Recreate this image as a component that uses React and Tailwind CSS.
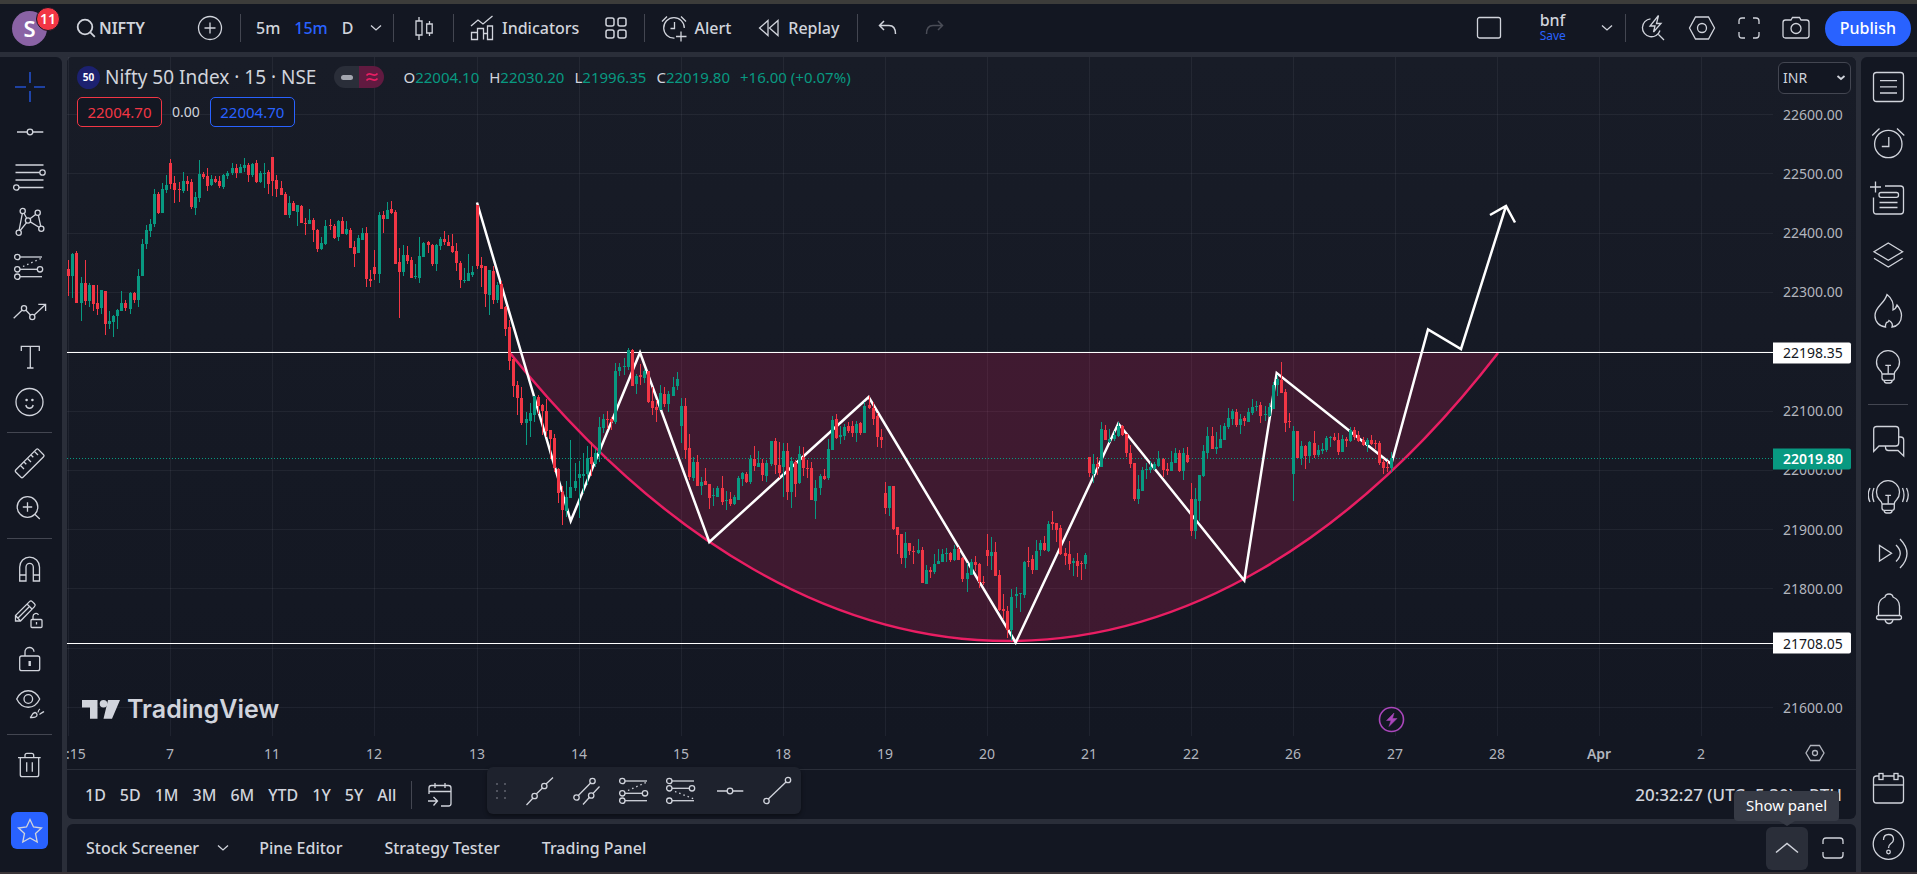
import React, { useState } from 'react';

// Visible pane, in chart units
const PANE_W = 1706;
const PANE_H = 679;
const priceToY = (price) => 57.5 + (22600 - price) * 0.593;
const slotToX = (slot) => 1 + Math.floor(slot * 4.083 + 0.76);

const priceLabels = [22600, 22500, 22400, 22300, 22100, 22000, 21900, 21800, 21600];
const gridPrices = [22600, 22500, 22400, 22300, 22200, 22100, 22000, 21900, 21800, 21700, 21600];
const timeLabels = ['11:15', '7', '11', '12', '13', '14', '15', '18', '19', '20', '21', '22', '26', '27', '28', 'Apr', '2'];

// Each bar is [high, open, close, low], three ticks to a unit, counted down from `top`
const series = [
  {
    slot: 0,
    top: 73,
    bars: [
      [390, 417, 437, 497], [369, 437, 372, 503], [363, 369, 518, 518], [441, 518, 459, 572], [390, 459, 513, 525],
      [459, 513, 465, 531], [465, 465, 521, 543], [465, 519, 537, 555], [480, 534, 480, 551], [483, 483, 581, 614],
      [543, 581, 573, 597], [555, 576, 558, 620], [537, 558, 540, 597], [483, 543, 519, 543], [510, 519, 534, 543],
      [486, 537, 489, 551], [486, 489, 510, 518], [417, 510, 438, 530], [327, 437, 342, 438], [285, 342, 300, 357],
      [267, 303, 282, 321], [177, 282, 192, 291], [186, 192, 249, 252], [159, 249, 177, 249], [135, 180, 165, 189],
      [87, 99, 162, 177], [138, 159, 180, 219], [156, 177, 180, 216], [126, 183, 153, 189], [138, 153, 162, 183],
      [147, 156, 231, 237], [186, 234, 201, 255], [90, 204, 132, 216], [126, 132, 141, 147], [114, 138, 168, 183],
      [135, 165, 147, 168], [138, 147, 156, 159], [138, 153, 168, 174], [132, 171, 135, 177], [123, 138, 129, 147],
      [99, 129, 114, 135], [102, 114, 129, 144], [102, 129, 111, 129], [84, 114, 105, 126], [99, 105, 135, 156],
      [99, 135, 102, 141], [90, 99, 156, 159], [123, 156, 129, 159], [99, 132, 129, 174], [120, 126, 162, 192],
      [81, 81, 153, 198], [135, 150, 177, 201], [153, 174, 195, 195], [186, 192, 255, 255], [198, 255, 219, 264],
      [213, 219, 243, 243], [225, 246, 225, 288], [225, 228, 279, 279], [264, 279, 282, 315], [237, 282, 270, 282],
      [264, 270, 300, 336], [297, 300, 357, 366], [321, 357, 339, 360], [270, 342, 288, 345], [267, 285, 288, 300],
      [282, 288, 324, 327], [270, 321, 273, 333], [261, 273, 312, 312], [273, 312, 297, 315], [294, 300, 354, 354],
      [333, 351, 372, 411], [315, 369, 324, 369], [294, 330, 309, 330], [291, 309, 447, 471], [420, 447, 453, 471],
      [360, 411, 432, 450], [246, 432, 255, 459], [243, 255, 267, 309], [216, 267, 240, 267], [213, 237, 249, 252],
      [240, 246, 402, 402], [354, 396, 426, 564], [345, 426, 375, 438], [348, 375, 393, 402], [381, 390, 444, 444],
      [402, 441, 438, 447], [321, 444, 378, 459], [336, 381, 339, 381], [333, 336, 345, 369], [342, 345, 402, 408],
      [342, 402, 345, 423], [321, 348, 327, 360], [303, 327, 336, 345], [315, 336, 348, 348], [312, 348, 366, 369],
      [339, 363, 399, 423], [393, 399, 450, 474], [414, 453, 450, 459], [372, 453, 429, 453], [408, 435, 426, 441],
      [225, 225, 408, 417], [381, 405, 414, 471], [408, 408, 492, 531], [420, 495, 420, 555], [408, 423, 510, 522],
      [456, 510, 465, 519], [453, 462, 537, 537], [528, 531, 597, 618], [570, 591, 693, 720], [684, 687, 768, 801],
      [753, 765, 804, 855], [771, 804, 879, 885], [846, 879, 867, 945], [819, 873, 849, 921], [798, 855, 798, 876],
      [795, 801, 828, 852], [822, 825, 843, 915], [807, 843, 903, 921],
    ],
  },
  {
    slot: 118,
    top: 273,
    bars: [
      [300, 300, 327, 387], [312, 324, 414, 426], [414, 417, 489, 519], [468, 486, 540, 585], [453, 543, 501, 561],
      [330, 504, 471, 504], [399, 474, 453, 483], [393, 444, 432, 564], [369, 438, 432, 489], [348, 432, 384, 465],
      [336, 381, 402, 438], [357, 402, 369, 411], [261, 372, 291, 396], [252, 294, 267, 309], [243, 267, 270, 297],
      [261, 267, 276, 300], [99, 276, 123, 282], [99, 123, 111, 138], [84, 111, 108, 135], [54, 111, 60, 120],
      [57, 60, 168, 168], [132, 162, 138, 192], [102, 135, 141, 165], [117, 144, 123, 159], [123, 123, 216, 219],
      [171, 213, 234, 255], [210, 231, 240, 276], [165, 240, 189, 240], [171, 192, 222, 231], [183, 222, 192, 246],
      [141, 198, 171, 198], [126, 168, 147, 180], [204, 288, 228, 339], [204, 228, 360, 387], [312, 354, 441, 450],
      [381, 444, 396, 453], [375, 396, 468, 468], [441, 468, 456, 495], [414, 453, 465, 465], [462, 462, 504, 537],
      [474, 498, 495, 528], [468, 501, 474, 501], [438, 474, 516, 525], [483, 513, 510, 540], [486, 507, 522, 528],
      [495, 522, 501, 525], [438, 510, 444, 510], [426, 447, 429, 468], [426, 432, 456, 459], [375, 456, 387, 462],
      [348, 387, 408, 423], [363, 411, 399, 411], [387, 399, 435, 453], [390, 438, 399, 456], [333, 402, 333, 408],
      [324, 333, 405, 432], [336, 405, 429, 444], [339, 411, 363, 501], [339, 363, 486, 510], [381, 486, 393, 534],
      [390, 396, 462, 501], [348, 459, 372, 462], [351, 381, 414, 438], [390, 414, 417, 444], [396, 414, 510, 510],
      [450, 513, 474, 567], [432, 474, 438, 495], [417, 438, 447, 450], [327, 444, 357, 450], [258, 360, 270, 360],
      [252, 267, 324, 327], [288, 321, 315, 342], [282, 318, 291, 330], [276, 288, 303, 309], [273, 288, 309, 321],
      [273, 309, 282, 336], [276, 279, 309, 315], [216, 309, 228, 309], [198, 225, 234, 237], [216, 234, 267, 285],
      [249, 258, 321, 351], [297, 321, 330, 354],
    ],
  },
  {
    slot: 200,
    top: 323,
    bars: [
      [306, 339, 384, 402], [318, 384, 318, 408], [318, 318, 447, 450], [441, 441, 465, 522], [462, 462, 534, 552],
      [456, 534, 489, 564], [489, 489, 513, 525], [498, 513, 516, 552], [477, 519, 510, 522], [501, 510, 609, 609],
      [555, 612, 570, 612], [561, 570, 576, 594], [522, 576, 552, 582], [507, 552, 543, 552], [507, 546, 522, 546],
      [504, 522, 519, 546], [516, 519, 540, 546], [495, 540, 507, 543], [501, 507, 540, 540], [531, 534, 597, 606],
      [549, 597, 579, 636], [537, 585, 546, 585], [528, 546, 555, 573], [549, 552, 606, 624], [588, 606, 609, 615],
      [462, 510, 528, 558], [471, 528, 516, 570], [486, 516, 588, 588], [570, 585, 690, 693], [642, 687, 693, 717],
      [678, 693, 750, 774], [627, 750, 651, 783], [621, 648, 642, 684], [639, 642, 639, 696], [543, 645, 546, 654],
      [501, 543, 546, 561], [525, 537, 570, 582], [480, 570, 513, 570], [480, 510, 489, 528], [468, 489, 510, 513],
      [423, 513, 432, 516], [393, 426, 432, 450], [429, 429, 450, 486], [435, 444, 522, 525], [504, 519, 528, 555],
      [483, 522, 552, 570], [534, 549, 543, 588], [519, 543, 558, 591], [543, 549, 552, 600], [519, 552, 525, 567],
      [231, 231, 279, 291], [222, 282, 252, 309], [231, 252, 261, 285], [126, 261, 147, 261], [135, 150, 180, 180],
      [147, 186, 177, 189], [153, 177, 165, 183], [126, 168, 138, 171], [135, 138, 165, 168], [162, 162, 219, 231],
      [195, 219, 252, 264], [249, 249, 357, 363], [285, 357, 327, 372], [261, 333, 270, 333], [249, 270, 267, 297],
      [243, 270, 261, 279], [246, 267, 252, 270], [213, 258, 237, 261], [234, 237, 270, 291], [249, 267, 273, 285],
      [213, 273, 246, 273], [204, 249, 219, 249], [210, 219, 273, 276], [204, 273, 219, 300], [201, 225, 246, 249],
      [309, 357, 453, 468], [324, 453, 357, 477], [285, 363, 285, 423], [195, 288, 213, 291], [141, 219, 168, 234],
      [141, 168, 207, 207], [156, 207, 201, 222], [135, 204, 177, 204], [129, 180, 138, 180], [84, 141, 114, 147],
      [87, 117, 93, 135], [87, 96, 135, 141], [102, 135, 117, 162],
    ],
  },
  {
    slot: 288,
    top: 263,
    bars: [
      [288, 294, 303, 318], [264, 306, 276, 306], [237, 279, 261, 285], [243, 261, 258, 273], [246, 255, 288, 309],
      [258, 285, 282, 303], [249, 288, 261, 291], [186, 267, 195, 267], [165, 195, 177, 228], [126, 180, 219, 219],
      [207, 216, 309, 336], [279, 303, 306, 324], [318, 462, 333, 543], [333, 333, 414, 414], [363, 414, 378, 435],
      [375, 378, 408, 447], [363, 408, 366, 429], [333, 369, 405, 414], [375, 405, 390, 411], [369, 393, 387, 402],
      [348, 390, 354, 396], [348, 354, 351, 381], [339, 351, 360, 363], [339, 360, 396, 405], [345, 396, 357, 396],
      [351, 357, 363, 381], [321, 363, 330, 366], [321, 330, 351, 360], [333, 345, 363, 366], [351, 360, 375, 378],
      [354, 375, 360, 396], [345, 360, 372, 375], [360, 369, 372, 387], [363, 369, 429, 435], [417, 426, 444, 462],
      [423, 441, 444, 456], [396, 444, 414, 456],
    ],
  },
];

const candles = series.flatMap(({ slot, top, bars }) =>
  bars.map(([high, open, close, low], i) => ({
    x: slotToX(slot + i),
    up: close <= open,
    wickTop: Math.round(top + high / 3),
    wickBottom: Math.round(top + low / 3),
    bodyTop: Math.round(top + Math.min(open, close) / 3),
    bodyBottom: Math.round(top + Math.max(open, close) / 3),
  }))
);

const Icon = ({ size = 36, w, h, sw = 1.3, className = '', children }) => (
  <svg
    width={w || size}
    height={h || size}
    viewBox={`0 0 ${w || size} ${h || size}`}
    fill="none"
    stroke="currentColor"
    strokeWidth={sw}
    className={`shrink-0 ${className}`}
    aria-hidden="true"
  >
    {children}
  </svg>
);

const Chevron = () => (
  <Icon w={12} h={8}>
    <path d="M1 1.5l5 4.5 5-4.5" />
  </Icon>
);

const Fib = () => (
  <>
    <circle cx="5.3" cy="8" r="2.7" />
    <path d="M8 8h22" />
    <circle cx="5.3" cy="20.3" r="2.7" />
    <circle cx="28" cy="20.3" r="2.7" />
    <path d="M8 20.3h17.3" />
    <circle cx="5.3" cy="27.7" r="2.7" />
    <path d="M8 27.7h22" />
    <path d="M11 17.5L30 9" strokeDasharray="1.5 3" />
  </>
);

const HLine = () => (
  <>
    <circle cx="18" cy="18" r="2.8" />
    <path d="M5 18h10.2M20.8 18h10.5" />
  </>
);

const drawingTools = [
  {
    label: 'Cross',
    active: true,
    icon: <path d="M18 3v11M18 22v11M3 18h11M22 18h11" strokeWidth="1.6" />,
  },
  { label: 'Horizontal line', icon: <HLine /> },
  {
    label: 'Horizontal rays',
    icon: (
      <>
        <path d="M3.5 6h28M3.5 13.5h24.2M3.5 21h28M7 28.5h24.5" />
        <circle cx="30.5" cy="13.5" r="2.7" />
        <circle cx="4.3" cy="28.5" r="2.7" />
      </>
    ),
  },
  {
    label: 'Patterns',
    icon: (
      <>
        <circle cx="10.7" cy="7" r="2.6" />
        <circle cx="25.7" cy="8.7" r="2.6" />
        <circle cx="16" cy="16.5" r="2.6" />
        <circle cx="6.7" cy="28.7" r="2.6" />
        <circle cx="29.3" cy="24.7" r="2.6" />
        <path d="M10.3 9.6L7.1 26.1M12 9.3l2.7 4.9M18 14.8l5.6-4.4M26.3 11.2l2.4 11M14.6 18.7l-6.4 7.8M18.3 17.9l8.7 5.4" />
      </>
    ),
  },
  { label: 'Fibonacci', icon: <Fib /> },
  {
    label: 'Forecast',
    icon: (
      <>
        <path d="M1.7 24.3L10 16.2M14 16.3l4.400 4.700M22.200 21l11.300-10.500M26.300 10.300h7.300V17" />
        <circle cx="12" cy="14.3" r="2.6" />
        <circle cx="20.3" cy="23" r="2.6" />
      </>
    ),
  },
  { label: 'Text', icon: <path d="M9.3 12V7.3h18V12M18.3 7.3V29M15 29h6.5" /> },
  {
    label: 'Emoji',
    icon: (
      <>
        <circle cx="17.5" cy="18" r="13.5" />
        <circle cx="14.6" cy="16" r="1.3" fill="currentColor" stroke="none" />
        <circle cx="20.4" cy="16" r="1.3" fill="currentColor" stroke="none" />
        <path d="M13.8 21c1 4.3 6.4 4.3 7.4 0" />
      </>
    ),
  },
  null,
  {
    label: 'Measure',
    icon: (
      <>
        <path d="M24.3 4.4L3.7 25q-1 1 0 2l5.3 5.3q1 1 2 0L31.6 11.7q1-1 0-2l-5.300-5.300q-1-1-2 0z" />
        <path d="M8.5 20.5l3.5 3.5M12 17l2.3 2.3M15.5 13.5l3.5 3.5M19 10l2.3 2.3M22.5 6.5l3.5 3.5" />
      </>
    ),
  },
  {
    label: 'Zoom in',
    icon: (
      <>
        <circle cx="15.5" cy="17" r="10.3" />
        <path d="M10.8 17h9.4M15.5 12.300v9.400M22.800 24.300l5 4.700" />
      </>
    ),
  },
  null,
  {
    label: 'Magnet',
    icon: (
      <path d="M7.7 30V16a9.9 9.9 0 0 1 19.8 0v14h-6.2V16a3.6 3.6 0 0 0-7.3 0v14zM7.7 24H14M21.3 24h6.2" />
    ),
  },
  {
    label: 'Stay in drawing mode',
    icon: (
      <>
        <path d="M3.5 25V19.5L17.5 5.6q1.4-1.400 2.800 0l2.200 2.200q1.400 1.400 0 2.800L8.500 25zM3.500 19.500L8.500 25M15 8l5.200 5.200M6 22l11-11" />
        <rect x="19" y="23.5" width="11" height="8" rx="1" />
        <path d="M21 23.5V20.5a3 3 0 0 1 5.500-1.700M24.500 26v2.500" />
      </>
    ),
  },
  {
    label: 'Lock drawings',
    icon: (
      <>
        <rect x="7.7" y="15" width="20" height="14.7" rx="2" />
        <path d="M13 15v-3.700a4.500 4.500 0 0 1 9-.6" />
        <rect x="16.5" y="20" width="2.4" height="5" fill="currentColor" stroke="none" />
      </>
    ),
  },
  {
    label: 'Hide drawings',
    icon: (
      <>
        <path d="M4.7 13C10 2 22.5 2 27.7 13 22.5 24 10 24 4.7 13z" />
        <circle cx="16.3" cy="13" r="4.3" />
        <path d="M18 31.5c2-.5 1.500-4.500 5-5 2.500.5 2.800 3.500.5 4.500-1.500.7-3.500.5-5.500.5zM26 26.500c.3-2 1.500-3.300 2-3.500M27.500 28.500c1-1.500 2.500-1.500 4.500-3" />
      </>
    ),
  },
  null,
  {
    label: 'Remove drawings',
    icon: (
      <path d="M6 10.7h22.700M13 10.700V8.300q0-2 2-2h4.700q2 0 2 2v2.400M8.300 10.700v17q0 2 2 2h14.400q2 0 2-2v-17M14.700 15.300v9.400M20.300 15.300v9.400" />
    ),
  },
];

const Bulb = () => (
  <>
    <path d="M14 27c0-2-1-2.600-2.600-4.200a11.500 11.500 0 1 1 17.200 0C27 24.400 26.300 25 26.300 27zM14 27v4q0 2.300 2.300 2.300h7.700q2.300 0 2.300-2.300v-4M16 33.500q.5 2.500 2.500 2.500h3.300q2 0 2.500-2.500" />
    <path d="M17.300 18.300h5.700M20.200 18.300v8.500" />
  </>
);

const sideTools = [
  {
    label: 'Watchlist',
    icon: (
      <>
        <rect x="5.5" y="5.5" width="30" height="29" rx="3" />
        <path d="M12 13.7h17M12 19.8h17M12 26h17" />
      </>
    ),
  },
  {
    label: 'Alerts',
    icon: (
      <>
        <circle cx="20.3" cy="21" r="13.7" />
        <path d="M20.8 14v9.500h-7M4.200 12.500l7.300-7M29 5.500l7.300 7" />
      </>
    ),
  },
  {
    label: 'News',
    icon: (
      <>
        <path d="M2 8h11M7.500 2.500v11M17 7h15.500q3 0 3 3v22q0 3-3 3H8.500q-3 0-3-3V18.500" />
        <rect x="11" y="13.5" width="19.5" height="4.8" rx="2" />
        <path d="M11.5 23.500h18M11.500 28.500h18" />
      </>
    ),
  },
  { label: 'Data window', icon: <path d="M20.3 8l14.300 8.700-14.300 8.600L6 16.700zM6 23.300L20.300 32l14.300-8.700" /> },
  {
    label: 'Hotlists',
    icon: (
      <path d="M17.500 36C11.500 35.500 7 31 7 24.500c0-9 9.500-11.500 12-21 4.500 3.500 7 9.500 6 15.500 2-.8 3.300-2.500 4-5 2.500 3 4.500 6.500 4.500 10.500 0 6.500-4 11-9.500 11.500 1.200-3-.5-5-3-6.500-.6 1.700-1.400 2-2.500 2-.8 1.500-1.500 2.700-1 4.500z" />
    ),
  },
  { label: 'Ideas', icon: <Bulb /> },
  null,
  {
    label: 'Chats',
    icon: (
      <>
        <path d="M5.700 30.500V8.500q0-3 3-3h19q3 0 3 3v13.500q0 3-3 3H11z" />
        <path d="M17.500 25v1.500q0 3 3 3H30l5.700 5.500V19q0-3-3-3h-2" />
      </>
    ),
  },
  {
    label: 'Ideas stream',
    icon: (
      <>
        <Bulb />
        <path d="M6 11q-3 7 0 14M2 11q-3.500 7 0 14M34.500 11q3 7 0 14M38.500 11q3.500 7 0 14" />
      </>
    ),
  },
  {
    label: 'Streams',
    icon: <path d="M11.500 12.500v15.500l12-7.700zM28 12q8.500 8.300 0 16.500M32 6q14 14.500 0 29" />,
  },
  {
    label: 'Notifications',
    icon: (
      <>
        <path d="M10.500 26.500V17.500q0-7 6.500-9.500.5-3 4-3t4 3q6.500 2.500 6.500 9.500v9" />
        <rect x="8.500" y="26.500" width="25" height="4" rx="2" />
        <path d="M17 31q1 3.500 4 3.500t4-3.500" />
      </>
    ),
  },
];

const favoriteTools = [
  {
    label: 'Trend line',
    icon: (
      <>
        <path d="M4.500 32L10.800 25.300M14.500 20.800l6-5.800M24 11L31 4.500" />
        <circle cx="12.600" cy="23" r="2.700" />
        <circle cx="22.300" cy="13" r="2.700" />
      </>
    ),
  },
  {
    label: 'Parallel channel',
    icon: (
      <>
        <circle cx="7.5" cy="24.5" r="2.7" />
        <circle cx="23.5" cy="8" r="2.7" />
        <path d="M9.300 22.500L21.600 10M14 31.500l6.300-7M24 20.500l6.500-7" />
        <circle cx="22.2" cy="22.5" r="2.7" />
      </>
    ),
  },
  { label: 'Fib retracement', icon: <Fib /> },
  {
    label: 'Fib extension',
    icon: (
      <>
        <circle cx="5.3" cy="8" r="2.7" />
        <path d="M8 8h22" />
        <circle cx="5.3" cy="15.3" r="2.7" />
        <circle cx="28" cy="15.3" r="2.7" />
        <path d="M8 15.3h17.3" />
        <circle cx="5.3" cy="27.7" r="2.7" />
        <path d="M8 27.7h22" />
        <path d="M11 18.5l19 7.500" strokeDasharray="1.5 3" />
      </>
    ),
  },
  { label: 'Horizontal line', icon: <HLine /> },
  {
    label: 'Line',
    icon: (
      <>
        <circle cx="7.5" cy="28" r="2.7" />
        <circle cx="29" cy="7" r="2.7" />
        <path d="M9.300 26L27 9" />
      </>
    ),
  },
];

const ranges = ['1D', '5D', '1M', '3M', '6M', 'YTD', '1Y', '5Y', 'All'];

const ohlc = [
  ['O', '22004.10'],
  ['H', '22030.20'],
  ['L', '21996.35'],
  ['C', '22019.80'],
];

const Divider = () => <div className="h-7 w-px shrink-0 bg-[#434651]" />;

const TopBar = () => (
  <header className="flex h-12 shrink-0 items-center bg-[#131722] text-base font-medium">
    <div className="flex w-[240px] items-center">
      <button aria-label="Account" className="relative ml-3 flex size-[35px] items-center justify-center rounded-full bg-[#8a63a5] text-[22px] font-semibold text-white">
        S
        <span className="absolute -top-1 left-6 flex size-6 items-center justify-center rounded-full border border-[#131722] bg-[#f23645] text-sm font-semibold">
          11
        </span>
      </button>
      <button className="ml-[29px] flex items-center gap-[3px] font-semibold">
        <Icon w={20} h={20} sw={1.8}>
          <circle cx="9" cy="9" r="7.3" />
          <path d="M14.3 14.3l4.5 4.5" />
        </Icon>
        NIFTY
      </button>
      <button aria-label="Compare" className="mr-[17px] ml-auto">
        <Icon w={26} h={26}>
          <circle cx="13" cy="13" r="11.5" />
          <path d="M7.5 13h11M13 7.5v11" />
        </Icon>
      </button>
    </div>
    <Divider />
    <div className="flex w-[152px] items-center gap-[14px] pl-[15px]">
      <button>5m</button>
      <button className="text-[#2962ff]">15m</button>
      <button>D</button>
      <button aria-label="More intervals" className="ml-[3px]">
        <Chevron />
      </button>
    </div>
    <Divider />
    <button aria-label="Chart type" className="flex w-[59px] justify-center">
      <Icon w={20} h={28}>
        <path d="M5 3v4M5 21v5M2 7h6v14H2zM15.5 7v3M15.5 19v3M12.7 10h5.500v9h-5.500z" />
      </Icon>
    </button>
    <Divider />
    <button className="flex items-center gap-2 pl-[16px]">
      <Icon w={24} h={26}>
        <path d="M1.500 24.500v-7h6v7zM7.500 24.500v-11h6v11M13.500 24.500v-6h4v6M17.500 24.500V11h5v13.500zM1 11l7-6 5 4 9.500-8" />
      </Icon>
      Indicators
    </button>
    <button aria-label="Layouts" className="mr-[17px] ml-[26px]">
      <Icon w={22} h={22} sw={1.5}>
        <rect x="1" y="1" width="8" height="8" rx="2" />
        <rect x="13" y="1" width="8" height="8" rx="2" />
        <rect x="1" y="13" width="8" height="8" rx="2" />
        <rect x="13" y="13" width="8" height="8" rx="2" />
      </Icon>
    </button>
    <Divider />
    <button className="flex items-center gap-[6px] pl-[16px]">
      <Icon w={27} h={27}>
        <path d="M13.500 23.200A10.300 10.300 0 1 1 23.300 13M13.500 7v6.500H9.500M1 6.500L6 1.500M20 1.500l5 5M20 16.500v10M15 21.500h10.500" />
      </Icon>
      Alert
    </button>
    <button className="mr-[18px] ml-[27px] flex items-center gap-2">
      <Icon w={22} h={18}>
        <path d="M10 1.500v15L1.500 9zM20 1.500v15L11.500 9z" />
      </Icon>
      Replay
    </button>
    <Divider />
    <button aria-label="Undo" className="ml-[20px]">
      <Icon w={20} h={16} sw={1.5}>
        <path d="M6 1L1.500 5.500 6 10M1.500 5.500H11q6.500 0 6.500 8.500" />
      </Icon>
    </button>
    <button aria-label="Redo" className="ml-[27px] text-[#4a4d57]" disabled>
      <Icon w={20} h={16} sw={1.5}>
        <path d="M13 1l4.500 4.500L13 10M17.500 5.500H8q-6.500 0-6.500 8.500" />
      </Icon>
    </button>

    <div className="ml-auto flex items-center">
      <button aria-label="Select layout" className="mr-[38px]">
        <Icon w={26} h={24}>
          <rect x="1.5" y="1.5" width="23" height="20.5" rx="2" />
        </Icon>
      </button>
      <button className="flex flex-col items-start text-base leading-4">
        bnf
        <span className="text-xs leading-4 font-normal text-[#2962ff]">Save</span>
      </button>
      <button aria-label="Manage layouts" className="mr-[12px] ml-[35px]">
        <Chevron />
      </button>
      <Divider />
      <button aria-label="Quick search" className="ml-[15px]">
        <Icon w={26} h={28}>
          <path d="M9.500 4.800A9 9 0 1 0 19 16.500M17.500 20.500l5.500 5.500M17.500 1.500L9 12h5l-1.500 6L20 9.500h-4.500z" />
        </Icon>
      </button>
      <button aria-label="Settings" className="ml-[21px]">
        <Icon w={28} h={26}>
          <path d="M7.500 2h13l6 11-6 11h-13l-6-11z" />
          <circle cx="14" cy="13" r="4.5" />
        </Icon>
      </button>
      <button aria-label="Fullscreen" className="ml-[21px]">
        <Icon w={24} h={24}>
          <path d="M2 8V5q0-3 3-3h3M16 2h3q3 0 3 3v3M22 16v3q0 3-3 3h-3M8 22H5q-3 0-3-3v-3" />
        </Icon>
      </button>
      <button aria-label="Take a snapshot" className="ml-[21px]">
        <Icon w={28} h={26}>
          <path d="M9 5l1.500-2.500h7L19 5h5.500q2.500 0 2.500 2.500v13q0 2.500-2.500 2.500h-21Q1 23 1 20.500v-13Q1 5 3.500 5z" />
          <circle cx="14" cy="13.5" r="5" />
        </Icon>
      </button>
      <button className="mr-[6px] ml-[15px] flex h-[35px] items-center rounded-full bg-[#2962ff] px-[15px] text-white">Publish</button>
    </div>
  </header>
);

const LeftBar = () => (
  <nav className="flex w-[62px] shrink-0 flex-col rounded-tr-md bg-[#131722] pt-[7px]">
    {drawingTools.map((tool, i) =>
      tool ? (
        <button
          key={tool.label}
          aria-label={tool.label}
          className={`flex h-[45px] items-center justify-center pr-[2px] ${tool.active ? 'text-[#2350cb]' : ''}`}
        >
          <Icon>{tool.icon}</Icon>
        </button>
      ) : (
        <div key={i} className="flex h-4 items-center px-[7px]">
          <div className="mr-[3px] h-px w-full bg-[#434651]" />
        </div>
      )
    )}
    <button aria-label="Favorites" className="mt-auto mb-[23px] ml-[11px] flex size-[37px] items-center justify-center rounded-md bg-[#2962ff]">
      <Icon w={26} h={26}>
        <path d="M13 1.500l3.500 7.500 8 1-6 5.500 1.700 8.500L13 20l-7.200 4 1.700-8.500L1.500 10l8-1z" />
      </Icon>
    </button>
  </nav>
);

const RightBar = () => (
  <aside className="flex w-14 shrink-0 flex-col rounded-tl-md bg-[#131722] pt-[2px] pr-[2px]">
    {sideTools.map((tool, i) =>
      tool ? (
        <button key={tool.label} aria-label={tool.label} className="flex h-14 items-center justify-center">
          <Icon size={41}>{tool.icon}</Icon>
        </button>
      ) : (
        <div key={i} className="flex h-[18px] items-center px-[7px]">
          <div className="h-px w-full bg-[#434651]" />
        </div>
      )
    )}
    <button aria-label="Calendar" className="mt-auto flex h-14 items-center justify-center">
      <Icon size={41}>
        <rect x="5.5" y="8" width="30" height="27" rx="3" />
        <path d="M5.500 17h30" />
        <rect x="11" y="5.5" width="4" height="6" fill="#131722" />
        <rect x="26" y="5.5" width="4" height="6" fill="#131722" />
      </Icon>
    </button>
    <button aria-label="Help" className="flex h-14 items-center justify-center">
      <Icon size={41}>
        <circle cx="20.5" cy="20" r="15.3" />
        <path d="M15.500 16q0-5.500 5-5.500t5 5q0 2.500-2.800 4.200-2.200 1.500-2.200 4.300" />
        <circle cx="20.5" cy="28" r="1.8" />
      </Icon>
    </button>
  </aside>
);

const Chart = () => (
  <svg viewBox={`0 0 ${PANE_W} ${PANE_H}`} preserveAspectRatio="none" className="absolute inset-0 size-full" role="img" aria-label="Nifty 50 Index price chart">
    <g stroke="#f0f3fa" strokeOpacity="0.06">
      {gridPrices.map((price) => (
        <path key={price} d={`M0 ${Math.floor(priceToY(price)) + 0.5}H${PANE_W}`} />
      ))}
      {timeLabels.map((label, i) => (
        <path key={label} d={`M${slotToX(i * 25) + 0.5} 0V${PANE_H}`} />
      ))}
    </g>
    <path d="M443 296C752 680 1134 680 1431 296z" fill="#e91e63" fillOpacity="0.2" />
    <path d="M443 296C752 680 1134 680 1431 296" fill="none" stroke="#e91e63" strokeWidth="2.5" />
    <path d="M0 295.500H1706M0 586.500H1706" stroke="#fff" />
    <path d="M0 401.500H1706" stroke="#089981" strokeDasharray="1 2" />
    <path
      d="M410 145.500L503.700 464 573 295.500 642.300 485 801.700 340 948.700 585.500 1051.300 366.500 1177.300 523.500 1209.700 316 1324.300 407 1361 272.500 1394 292 1439 149M1423 158L1439 149 1448 165.500"
      fill="none"
      stroke="#fff"
      strokeWidth="2.5"
    />
    <g shapeRendering="crispEdges">
      {candles.map((c) => (
        <path
          key={c.x}
          fill={c.up ? '#089981' : '#f23645'}
          d={`M${c.x} ${c.wickTop}h1V${c.wickBottom}h-1zM${c.x - 1} ${c.bodyTop}h3V${Math.max(c.bodyBottom, c.bodyTop + 1)}h-3z`}
        />
      ))}
    </g>
    <g stroke="#ab47bc" strokeWidth="1.6">
      <circle cx="1324.5" cy="662.5" r="12" fill="#131722" />
      <path d="M1327 656l-7.500 7.500h4.500l-2 6 8-8h-4.500z" fill="#ab47bc" strokeWidth="0.5" />
    </g>
  </svg>
);

const Legend = () => (
  <div className="absolute top-0 left-[10px] pt-2">
    <div className="flex h-6 items-center">
      <span className="flex size-[23px] items-center justify-center rounded-full bg-[#1c2170] text-[10px] font-bold text-white">50</span>
      <h1 className="ml-[5px] text-[19px] font-normal whitespace-nowrap">Nifty 50 Index · 15 · NSE</h1>
      <span className="ml-[18px] flex h-[22px] w-[50px] overflow-hidden rounded-full">
        <span className="flex flex-1 items-center justify-center bg-[#2a2e39]">
          <span className="h-[5px] w-3 rounded-full bg-[#a3a6af]" />
        </span>
        <span className="flex flex-1 items-center justify-center bg-[#611a40] text-[#e91e63]">
          <Icon w={14} h={12} sw={1.8}>
            <path d="M1.500 4.500q2-2.500 5.500-1t5.500-1M1.500 9.500q2-2.500 5.500-1t5.500-1" />
          </Icon>
        </span>
      </span>
      <div className="ml-[19px] flex gap-[10px] text-[15px] whitespace-nowrap text-[#089981]">
        {ohlc.map(([label, value]) => (
          <span key={label}>
            <span className="text-[#d1d4dc]">{label}</span>
            {value}
          </span>
        ))}
        <span>+16.00 (+0.07%)</span>
      </div>
    </div>
    <div className="mt-2 flex items-center gap-[10px] text-[15px]">
      <button className="h-[30px] w-[85px] rounded-[5px] border border-[#f23645] bg-[#131722] text-[#f23645]">22004.70</button>
      <span className="text-sm">0.00</span>
      <button className="h-[30px] w-[85px] rounded-[5px] border border-[#2962ff] bg-[#131722] text-[#2962ff]">22004.70</button>
    </div>
  </div>
);

const PriceAxis = () => {
  const at = (price) => ({ top: `${(priceToY(price) / PANE_H) * 100}%` });
  return (
    <div className="relative w-[83px] text-sm text-[#b2b5be]">
      {priceLabels.map((price) => (
        <span key={price} style={at(price)} className="absolute left-[10px] -translate-y-1/2">
          {price.toFixed(2)}
        </span>
      ))}
      {[22198.35, 21708.05].map((price) => (
        <span key={price} style={at(price)} className="absolute left-0 flex h-[21px] w-[78px] -translate-y-1/2 items-center rounded-r-xs bg-white pl-[10px] text-[#131722]">
          {price.toFixed(2)}
        </span>
      ))}
      <span style={at(22019.8)} className="absolute left-0 flex h-[21px] w-[78px] -translate-y-1/2 items-center rounded-r-xs bg-[#089981] pl-[10px] font-semibold text-white">
        22019.80
      </span>
      <div className="absolute top-[5px] left-[5px] flex items-center">
        <select aria-label="Currency" className="h-8 w-[73px] appearance-none rounded-md border border-[#434651] bg-[#131722] pl-1 text-sm text-[#d1d4dc]">
          <option>INR</option>
          <option>USD</option>
        </select>
        <Icon w={10} h={8} sw={1.8} className="pointer-events-none absolute right-[5px] text-[#d1d4dc]">
          <path d="M1.500 2L5 5l3.500-3" />
        </Icon>
      </div>
    </div>
  );
};

const FavoritesToolbar = () => (
  <div className="absolute bottom-[5px] left-[420px] flex h-[47px] w-[314px] items-center rounded-md bg-[#1e222d] shadow-[0_2px_4px_rgba(0,0,0,0.4)]">
    <svg width="10" height="18" viewBox="0 0 10 18" fill="#50535e" className="mr-[10px] ml-[9px] shrink-0" aria-hidden="true">
      {[2, 9, 16].map((y) => (
        <path key={y} d={`M0 ${y - 1}h2v2h-2zM8 ${y - 1}h2v2h-2z`} />
      ))}
    </svg>
    {favoriteTools.map((tool) => (
      <button key={tool.label} aria-label={tool.label} className="flex h-full w-12 items-center justify-center">
        <Icon>{tool.icon}</Icon>
      </button>
    ))}
  </div>
);

const BottomPanel = () => (
  <footer className="flex h-12 shrink-0 items-center rounded-t-md bg-[#131722] pl-[19px] text-base font-medium whitespace-nowrap">
    <button>Stock Screener</button>
    <button aria-label="More screeners" className="ml-[18px]">
      <Chevron />
    </button>
    <button className="ml-[30px]">Pine Editor</button>
    <button className="ml-[42px]">Strategy Tester</button>
    <button className="ml-[42px]">Trading Panel</button>
    <div className="relative mr-[11px] ml-auto flex items-center gap-[13px]">
      <button aria-label="Show panel" aria-describedby="panel-tip" className="flex h-[43px] w-[42px] items-center justify-center rounded-md bg-[#2a2e39]">
        <Icon w={24} h={12} sw={1.5}>
          <path d="M1 10.500L12 1.500l11 9" />
        </Icon>
      </button>
      <button aria-label="Maximize panel">
        <Icon w={24} h={24}>
          <path d="M2 8V5q0-3 3-3h14q3 0 3 3v3M22 16v3q0 3-3 3H5q-3 0-3-3v-3" />
        </Icon>
      </button>
      <div id="panel-tip" role="tooltip" className="absolute bottom-full left-[-32px] mb-[6px] flex h-[30px] w-[105px] items-center justify-center rounded-sm bg-[#363a45] text-[15px] font-normal text-white">
        Show panel
        <span className="absolute top-full size-0 border-x-[8px] border-t-[5px] border-x-transparent border-t-[#363a45]" />
      </div>
    </div>
  </footer>
);

const App = () => {
  const [range, setRange] = useState('');

  return (
    <div className="flex h-screen flex-col overflow-hidden border-t-4 border-b-2 border-t-[#3c3c3a] border-b-[#3a3438] bg-[#2a2e39] font-['Noto_Sans',sans-serif] text-[#d1d4dc]">
      <TopBar />
      <div className="mt-[5px] flex min-h-0 flex-1 gap-[5px]">
        <LeftBar />
        <main className="flex min-w-0 flex-1 flex-col gap-[5px]">
          <section className="relative flex min-h-0 flex-1 flex-col rounded-md bg-[#131722]">
            <div className="flex min-h-0 flex-1 rounded-t-md bg-linear-to-b from-[#181c27] to-[#131722]">
              <div className="relative min-w-0 flex-1 overflow-hidden">
                <Chart />
                <Legend />
                <div className="absolute bottom-[8px] left-[15px] flex items-center gap-[7px]">
                  <svg width="38" height="19" viewBox="0 0 38 19" fill="currentColor" aria-hidden="true">
                    <path d="M0 0h15.500v18.700H8V7.500H0zM26 0h12l-8 18.700h-8.500z" />
                    <circle cx="21.5" cy="3.8" r="3.8" />
                  </svg>
                  <span className="font-['Inter',sans-serif] text-[25px] font-semibold">TradingView</span>
                </div>
              </div>
              <PriceAxis />
            </div>
            <div className="flex h-[34px] shrink-0 border-b border-[#2a2e39] text-sm text-[#b2b5be]">
              <div className="relative min-w-0 flex-1 overflow-hidden">
                {timeLabels.map((label, i) => (
                  <span
                    key={label}
                    style={{ left: `${(slotToX(i * 25) / PANE_W) * 100}%` }}
                    className={`absolute top-2 -translate-x-1/2 ${label === 'Apr' ? 'font-semibold' : ''}`}
                  >
                    {label}
                  </span>
                ))}
              </div>
              <button aria-label="Axis settings" className="flex w-[83px] items-center justify-center">
                <Icon w={20} h={18}>
                  <path d="M5.500 1.500h9L19 9l-4.500 7.500h-9L1 9z" />
                  <circle cx="10" cy="9" r="2.5" />
                </Icon>
              </button>
            </div>
            <div className="flex h-[49px] shrink-0 items-center pl-[18px] text-base font-medium">
              <div className="flex gap-[14px]">
                {ranges.map((r) => (
                  <button key={r} onClick={() => setRange(r)} className={r === range ? 'text-[#2962ff]' : ''}>
                    {r}
                  </button>
                ))}
              </div>
              <div className="mr-[15px] ml-[15px]">
                <Divider />
              </div>
              <button aria-label="Go to date">
                <Icon w={26} h={26}>
                  <path d="M2 12V6q0-2.500 2.500-2.500h17Q24 3.500 24 6v15.500q0 2.500-2.500 2.500H14M2 9.500h22M8 1v5M18 1v5M1 19h9M6.500 15l4 4-4 4.500" />
                </Icon>
              </button>
              <div className="mr-[14px] ml-auto flex gap-[15px] text-[17px]">
                <span>20:32:27 (UTC+5:30)</span>
                <span>RTH</span>
              </div>
            </div>
            <FavoritesToolbar />
          </section>
          <BottomPanel />
        </main>
        <RightBar />
      </div>
    </div>
  );
};

export default App;
